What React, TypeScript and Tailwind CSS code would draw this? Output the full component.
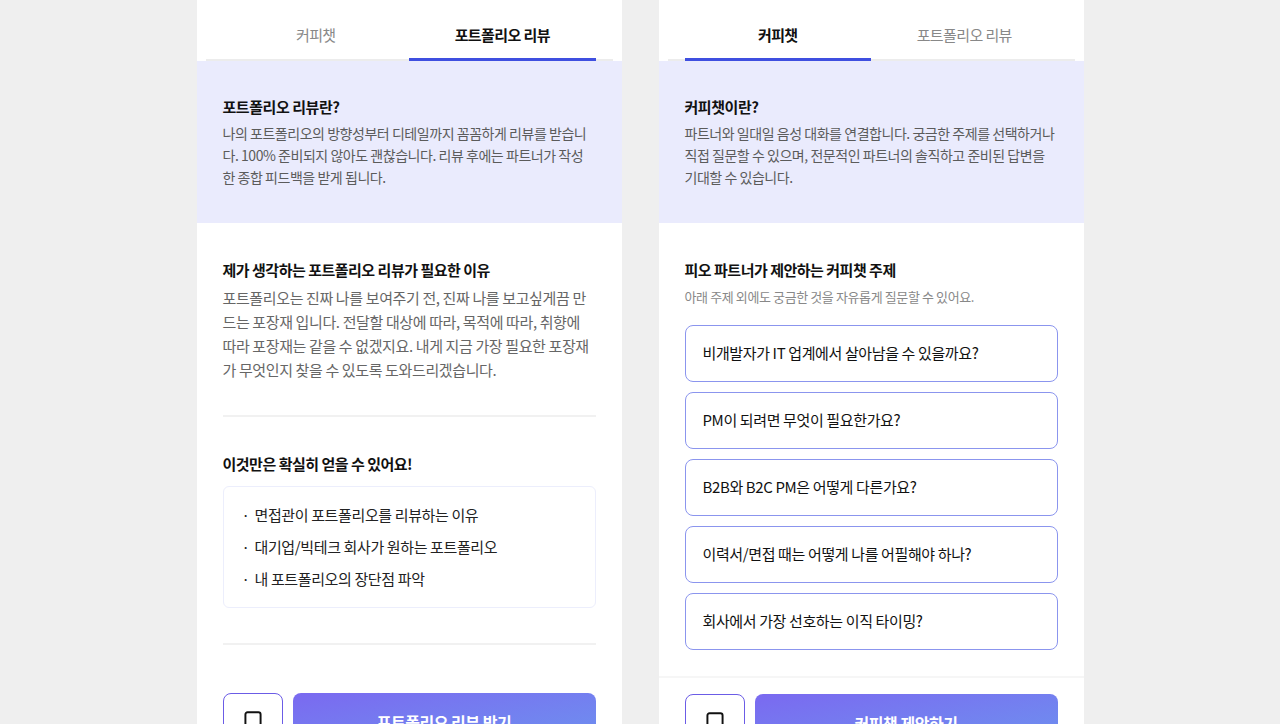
import {Bookmark} from 'lucide-react'

const font = "font-['Noto_Sans_CJK_KR','Noto_Sans',sans-serif]"

const Tabs = ({active}: {active: 0 | 1}) => {
	const labels = ['커피챗', '포트폴리오 리뷰']
	return (
		<div className="px-[9px]">
			<div className="flex px-[17px] border-b-2 border-[#ececec]">
				{labels.map((label, i) => (
					<div
						key={label}
						className={`flex-1 h-[61px] -mb-[2px] flex items-end justify-center pb-[13px] border-b-[3px] text-[15px] leading-5 tracking-[-0.04em] ${
							i === active ? 'border-[#3f4fe0] text-[#111] font-bold' : 'border-transparent text-[#888]'
						}`}
					>
						{label}
					</div>
				))}
			</div>
		</div>
	)
}

const Intro = ({title, lines}: {title: string, lines: string[]}) => (
	<section className="bg-[#eaebfd] px-[26px] pt-[35px] pb-[35px]">
		<h2 className="text-[15px] leading-[22px] font-bold text-[#111] tracking-[-0.03em]">{title}</h2>
		<p className="mt-[4px] text-[14px] leading-[22px] text-[#5b5b5b] tracking-[-0.033em]">
			{lines.map(l => <span key={l} className="block whitespace-nowrap">{l}</span>)}
		</p>
	</section>
)

const BottomBar = ({label, bordered}: {label: string, bordered?: boolean}) => (
	<div className={`px-[26px] pt-[16px] pb-[20px] flex gap-[10px] bg-white ${bordered ? 'border-t-2 border-[#f6f6f6]' : ''}`}>
		<button className="w-[60px] h-[58px] shrink-0 rounded-[8px] border border-[#6b5ce6] flex items-center justify-center bg-white">
			<Bookmark size={26} strokeWidth={1.8} className="text-[#111]" />
		</button>
		<button className="flex-1 h-[58px] rounded-[8px] bg-linear-to-br from-[#7a69f0] to-[#6b93ef] text-white text-[16px] font-bold tracking-[-0.03em]">
			{label}
		</button>
	</div>
)

const PortfolioPanel = () => (
	<div className="w-[425px] shrink-0 bg-white">
		<Tabs active={1} />
		<Intro
			title="포트폴리오 리뷰란?"
			lines={[
				'나의 포트폴리오의 방향성부터 디테일까지 꼼꼼하게 리뷰를 받습니',
				'다. 100% 준비되지 않아도 괜찮습니다. 리뷰 후에는 파트너가 작성',
				'한 종합 피드백을 받게 됩니다.',
			]}
		/>
		<div className="px-[26px]">
			<section className="pt-[36px] pb-[33px] border-b-2 border-[#f1f1f1]">
				<h3 className="text-[15px] leading-[22px] font-bold text-[#111] tracking-[-0.033em]">제가 생각하는 포트폴리오 리뷰가 필요한 이유</h3>
				<p className="mt-[5px] text-[15px] leading-[24px] text-[#666] tracking-[-0.025em]">
					{[
						'포트폴리오는 진짜 나를 보여주기 전, 진짜 나를 보고싶게끔 만',
						'드는 포장재 입니다. 전달할 대상에 따라, 목적에 따라, 취향에',
						'따라 포장재는 같을 수 없겠지요. 내게 지금 가장 필요한 포장재',
						'가 무엇인지 찾을 수 있도록 도와드리겠습니다.',
					].map(l => <span key={l} className="block whitespace-nowrap">{l}</span>)}
				</p>
			</section>
			<section className="pt-[36px] pb-[35px] border-b-2 border-[#f1f1f1]">
				<h3 className="text-[15px] leading-[22px] font-bold text-[#111] tracking-[-0.033em]">이것만은 확실히 얻을 수 있어요!</h3>
				<ul className="mt-[11px] border border-[#eceefc] rounded-[6px] pl-[18px] py-[17px] flex flex-col gap-[10px]">
					{['면접관이 포트폴리오를 리뷰하는 이유', '대기업/빅테크 회사가 원하는 포트폴리오', '내 포트폴리오의 장단점 파악'].map(item => (
						<li key={item} className="flex text-[15px] leading-[22px] text-[#222] tracking-[-0.025em]">
							<span className="w-[13px]">·</span>
							{item}
						</li>
					))}
				</ul>
			</section>
		</div>
		<div className="h-[32px]" />
		<BottomBar label="포트폴리오 리뷰 받기" />
	</div>
)

const CoffeePanel = () => (
	<div className="w-[425px] shrink-0 bg-white">
		<Tabs active={0} />
		<Intro
			title="커피챗이란?"
			lines={[
				'파트너와 일대일 음성 대화를 연결합니다. 궁금한 주제를 선택하거나',
				'직접 질문할 수 있으며, 전문적인 파트너의 솔직하고 준비된 답변을',
				'기대할 수 있습니다.',
			]}
		/>
		<section className="px-[26px] pt-[36px] pb-[26px]">
			<h3 className="text-[15px] leading-[22px] font-bold text-[#111] tracking-[-0.033em]">피오 파트너가 제안하는 커피챗 주제</h3>
			<p className="mt-[6px] text-[13px] leading-[20px] text-[#888] tracking-[-0.03em]">아래 주제 외에도 궁금한 것을 자유롭게 질문할 수 있어요.</p>
			<div className="mt-[18px] flex flex-col gap-[10px]">
				{[
					'비개발자가 IT 업계에서 살아남을 수 있을까요?',
					'PM이 되려면 무엇이 필요한가요?',
					'B2B와 B2C PM은 어떻게 다른가요?',
					'이력서/면접 때는 어떻게 나를 어필해야 하나?',
					'회사에서 가장 선호하는 이직 타이밍?',
				].map(q => (
					<div key={q} className="h-[57px] rounded-[8px] border border-[#8b95ee] px-[17px] flex items-center text-[15px] text-[#111] tracking-[-0.025em]">
						{q}
					</div>
				))}
			</div>
		</section>
		<BottomBar label="커피챗 제안하기" bordered />
	</div>
)

const App = () => (
	<main className={`h-[724px] overflow-hidden bg-[#efefef] flex justify-center gap-[37px] ${font}`}>
		<PortfolioPanel />
		<CoffeePanel />
	</main>
)

export default App
